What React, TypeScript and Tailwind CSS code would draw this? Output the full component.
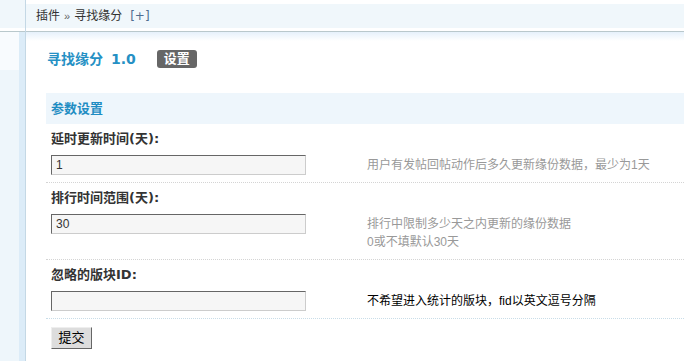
const font = 'font-["Liberation_Sans","Noto_Sans_CJK_SC",sans-serif]';
const boldFont = 'font-["DejaVu_Sans","Noto_Sans_CJK_SC",sans-serif]';

interface SettingProps {
  label: string;
  value: string;
  hint: string[];
  hintDark?: boolean;
  lineClass: string;
}

function SettingRow({ label, value, hint, hintDark, lineClass }: SettingProps) {
  return (
    <div className={`border-b ${lineClass} border-dotted`}>
      <div className="flex h-[24px] items-end pb-[2px] pl-[5px]">
        <span className={`${boldFont} text-[13px] leading-[14px] font-bold text-[#333]`}>{label}</span>
      </div>
      <div className="flex">
        <div className="w-[316px] shrink-0 pl-[5px] pt-[7px]">
          <input
            readOnly
            value={value}
            className="block h-[20px] w-[255px] border border-t-[#666] border-l-[#666] border-b-[#ccc] border-r-[#ccc] bg-[#f6f6f6] px-[4px] text-[12px] text-[#333] outline-none"
          />
        </div>
        <div
          className={`flex flex-col justify-center py-[8px] pl-[5px] text-[12px] leading-[18px] ${hintDark ? 'text-[#000]' : 'text-[#999]'}`}
        >
          {hint.map((h) => (
            <span key={h}>{h}</span>
          ))}
        </div>
      </div>
    </div>
  );
}

export default function App() {
  return (
    <div className={`flex h-[361px] w-[684px] overflow-hidden bg-white ${font}`}>
      {/* left menu strip */}
      <aside className="flex w-[26px] shrink-0 flex-col border-r border-[#c4d8e5]">
        <div className="h-[28px] bg-[#f0f7fb]" />
        <div className="h-[3px] bg-white" />
        <div className="h-[1px] bg-[#b9c8cc]" />
        <div className="flex flex-1">
          <div className="flex w-[19px] flex-col">
            <div className="h-[38px] bg-[#f8fbfe]" />
            <div className="flex-1 bg-[#eef6fb]" />
          </div>
          <div className="flex-1 bg-[#dcecf8]" />
        </div>
      </aside>

      <main className="flex min-w-0 flex-1 flex-col">
        <div className="h-[4px] bg-white" />
        <div className="flex h-[24px] items-center bg-[#f0f7fb] pl-[10px] text-[12px] text-[#333]">
          <span>插件</span>
          <span className="mx-[4px] text-[11px] text-[#666]">»</span>
          <span>寻找缘分</span>
          <span className='ml-[8px] font-["DejaVu_Sans",sans-serif] text-[#4f6d8f]'>[+]</span>
        </div>
        <div className="h-[3px] bg-white" />
        <div className="h-[1px] bg-[#b9c8cc]" />
        <div className="h-[9px] bg-gradient-to-b from-[#e6f1fb] to-white" />

        <div className="pl-[20px]">
          <div className="mt-[9px] flex h-[18px] items-center">
            <h1 className={`${boldFont} pl-[1px] text-[14px] font-bold text-[#2590c4]`}>
              寻找缘分<span className="ml-[8px]">1.0</span>
            </h1>
            <span className="ml-[21px] flex h-[18px] w-[40px] items-center justify-center rounded-[3px] bg-[#666] text-[13px] font-bold text-white">
              设置
            </span>
          </div>

          <div className="mt-[25px] flex h-[31px] items-center bg-[#eef6fc] pl-[5px] text-[13px] font-bold text-[#1f8dc3]">
            参数设置
          </div>

          <SettingRow
            label="延时更新时间(天):"
            value="1"
            hint={['用户有发帖回帖动作后多久更新缘份数据，最少为1天']}
            lineClass="border-[#d4d4d4]"
          />
          <SettingRow
            label="排行时间范围(天):"
            value="30"
            hint={['排行中限制多少天之内更新的缘份数据', '0或不填默认30天']}
            lineClass="border-[#d4d4d4]"
          />
          <SettingRow
            label="忽略的版块ID:"
            value=""
            hint={['不希望进入统计的版块，fid以英文逗号分隔']}
            hintDark
            lineClass="border-[#c9dde8]"
          />

          <div className="pl-[5px] pt-[8px]">
            <button className="flex h-[22px] w-[41px] items-center justify-center border border-t-[#eee] border-l-[#eee] border-b-[#666] border-r-[#666] bg-[#ddd] text-[13px] text-black">
              提交
            </button>
          </div>
        </div>
      </main>
    </div>
  );
}
